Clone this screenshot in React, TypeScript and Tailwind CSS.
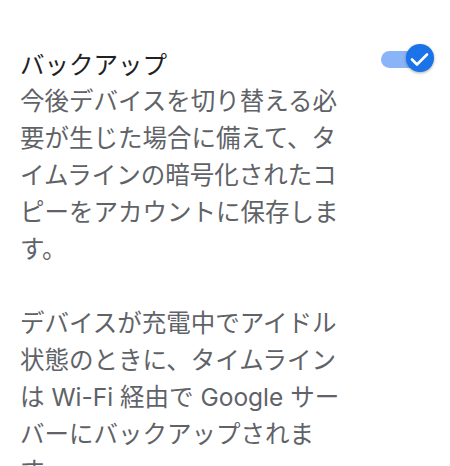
export default function App() {
  return (
    <div
      className="w-[450px] h-[466px] bg-white overflow-hidden flex items-start pl-5 pr-4 pt-[47px]"
      style={{ fontFamily: "Inter, 'Noto Sans CJK JP', sans-serif" }}
    >
      <div className="w-[330px] text-[24.5px]">
        <div className="text-[#202124] leading-[36px]">バックアップ</div>
        <div className="text-[#5f6368] leading-[37px] whitespace-pre-line">
          {"今後デバイスを切り替える必要が生じた場合に備えて、タイムラインの暗号化されたコピーをアカウントに保存します。\n\nデバイスが充電中でアイドル状態のときに、タイムラインは Wi-Fi 経由で Google サーバーにバックアップされます。"}
        </div>
      </div>
      <div className="ml-auto mt-[-3px] relative w-[53px] h-[28px] shrink-0">
        <div className="absolute left-0 top-[7px] w-[44px] h-[17px] rounded-full bg-[#8ab4f8]" />
        <div className="absolute right-0 top-0 w-[28px] h-[28px] rounded-full bg-[#1a73e8] shadow-[0_1px_3px_rgba(0,0,0,0.35)] flex items-center justify-center">
          <svg width="28" height="28" viewBox="0 0 28 28" fill="none">
            <path d="M6 15.5 L11 20.5 L21 10.5" stroke="white" strokeWidth="2.6" strokeLinecap="round" strokeLinejoin="round" />
          </svg>
        </div>
      </div>
    </div>
  );
}
